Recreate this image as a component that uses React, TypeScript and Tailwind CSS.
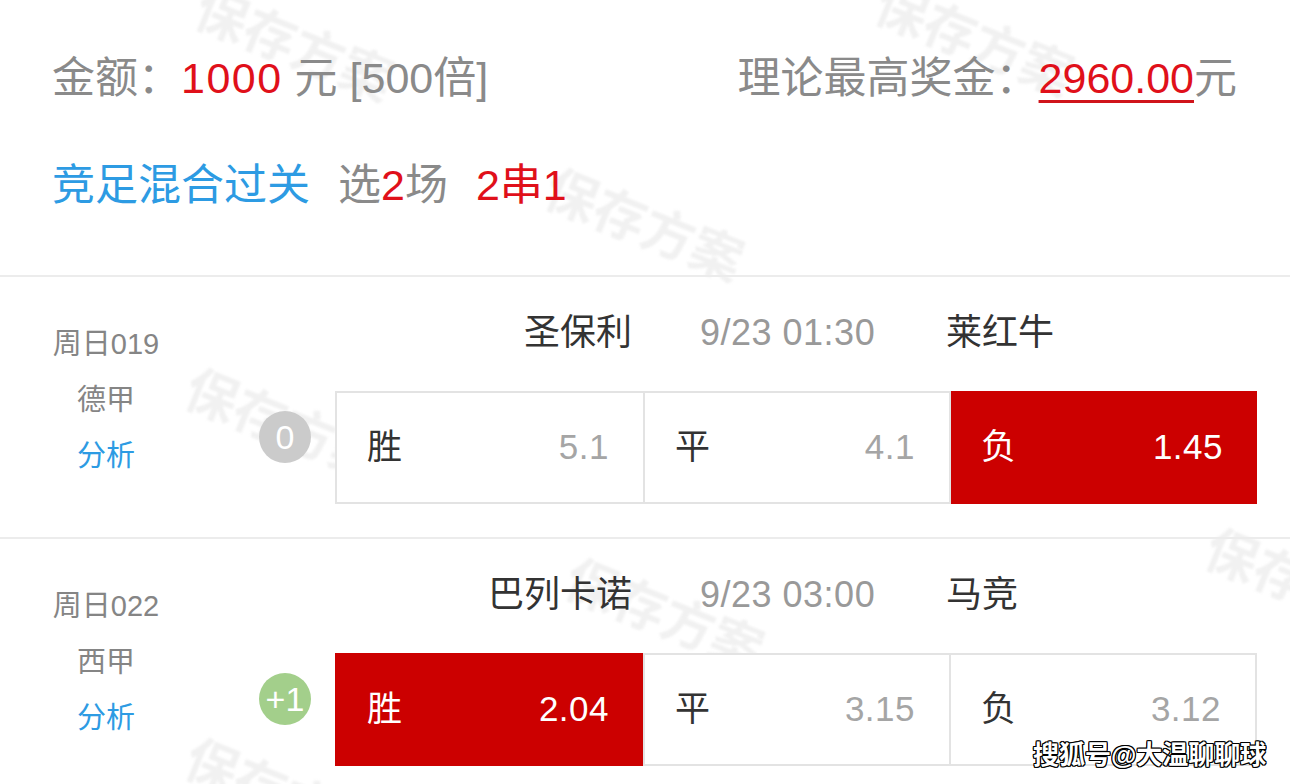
import React from "react";

const FONT = "font-['Liberation_Sans','Noto_Sans_CJK_SC',sans-serif]";

type Cell = { label: string; odd: string; on?: boolean };
type Match = {
  code: string;
  league: string;
  home: string;
  time: string;
  away: string;
  handicap: string;
  badge: "gray" | "green";
  cells: Cell[];
};

const matches: Match[] = [
  {
    code: "周日019",
    league: "德甲",
    home: "圣保利",
    time: "9/23 01:30",
    away: "莱红牛",
    handicap: "0",
    badge: "gray",
    cells: [
      { label: "胜", odd: "5.1" },
      { label: "平", odd: "4.1" },
      { label: "负", odd: "1.45", on: true },
    ],
  },
  {
    code: "周日022",
    league: "西甲",
    home: "巴列卡诺",
    time: "9/23 03:00",
    away: "马竞",
    handicap: "+1",
    badge: "green",
    cells: [
      { label: "胜", odd: "2.04", on: true },
      { label: "平", odd: "3.15" },
      { label: "负", odd: "3.12" },
    ],
  },
];

function Watermark({ className }: { className: string }) {
  return (
    <div
      className={`pointer-events-none absolute select-none whitespace-nowrap text-[52px] font-bold leading-none text-[#f1f1f1] blur-[1px] rotate-[22deg] ${className}`}
    >
      保存方案
    </div>
  );
}

function MatchRow({ m }: { m: Match }) {
  return (
    <div className="flex h-[262px] border-t-2 border-[#ececec]">
      <div className="flex w-[212px] flex-col items-center pt-[39px] text-[29px] leading-[56px]">
        <div className="text-[#858585]">{m.code}</div>
        <div className="text-[#858585]">{m.league}</div>
        <div className="text-[#2d9be3]">分析</div>
      </div>
      <div className="flex flex-1 flex-col">
        <div className="flex items-center pl-[123px] pt-[36px] text-[36px] leading-[40px]">
          <div className="w-[297px] text-right text-[#333]">{m.home}</div>
          <div className="ml-[68px] w-[178px] whitespace-nowrap text-[#999] tracking-[0.5px]">{m.time}</div>
          <div className="ml-[68px] text-[#333]">{m.away}</div>
        </div>
        <div className="mt-[38px] flex items-start">
          <div className="ml-[47px] mt-[20px] flex w-[52px] justify-center">
            <div
              className={`flex h-[52px] w-[52px] items-center justify-center rounded-full text-[34px] text-white ${
                m.badge === "gray" ? "bg-[#cbcbcb]" : "bg-[#a3cf8b]"
              }`}
            >
              {m.handicap}
            </div>
          </div>
          <div className="relative z-10 ml-[24px] grid h-[113px] w-[922px] grid-cols-3 border-2 border-[#e3e3e3] bg-white">
            {m.cells.map((c, i) => (
              <div
                key={i}
                className={`flex items-center justify-between pl-[30px] pr-[34px] text-[35px] ${
                  i > 0 ? "border-l-2 border-[#e3e3e3]" : ""
                } ${c.on ? "-my-[2px] bg-[#cc0000] text-white" : "bg-white"} ${
                  c.on && i === 2 ? "-mr-[2px]" : ""
                } ${c.on && i === 0 ? "-ml-[2px] pl-[32px]" : ""}`}
              >
                <span className={c.on ? "text-white" : "text-[#333]"}>{c.label}</span>
                <span className={`tracking-[0.5px] ${c.on ? "text-white" : "text-[#a5a5a5]"}`}>{c.odd}</span>
              </div>
            ))}
          </div>
        </div>
      </div>
    </div>
  );
}

export default function App() {
  return (
    <div className={`relative h-[784px] w-[1290px] overflow-hidden bg-white ${FONT}`}>
      <Watermark className="left-[190px] top-[20px]" />
      <Watermark className="left-[870px] top-[15px]" />
      <Watermark className="left-[540px] top-[200px]" />
      <Watermark className="left-[180px] top-[400px]" />
      <Watermark className="left-[560px] top-[590px]" />
      <Watermark className="left-[180px] top-[770px]" />
      <Watermark className="left-[1200px] top-[560px]" />

      <div className="relative">
        <div className="pl-[52px] pr-[53px] pt-[56px]">
          <div className="flex items-center justify-between text-[43px] leading-[44px]">
            <div className="whitespace-nowrap text-[#8a8a8a]">
              金额：<span className="tracking-[1.5px] text-[#e0101a]">1000</span> 元 [500倍]
            </div>
            <div className="whitespace-nowrap text-[#8a8a8a]">
              理论最高奖金：
              <span className="text-[#e0101a] underline decoration-[#d0141b] decoration-[3px] underline-offset-[7px]">
                2960.00
              </span>
              元
            </div>
          </div>
          <div className="mt-[63px] flex items-center whitespace-nowrap text-[43px] leading-[44px]">
            <span className="text-[#2d9be3]">竞足混合过关</span>
            <span className="ml-[28px] text-[#8a8a8a]">
              选<span className="text-[#e0101a]">2</span>场
            </span>
            <span className="ml-[28px] text-[#e0101a]">2串1</span>
          </div>
        </div>
        <div className="mt-[68px]">
          {matches.map((m, i) => (
            <MatchRow key={i} m={m} />
          ))}
        </div>
      </div>

      <div className="absolute left-[1033px] top-[738px] z-20 whitespace-nowrap text-[26px] font-bold leading-[34px] text-white [text-shadow:1px_1px_0_#000,-1px_-1px_0_#000,1px_-1px_0_#000,-1px_1px_0_#000,0_1px_0_#000,0_-1px_0_#000,1px_0_0_#000,-1px_0_0_#000]">
        搜狐号@大温聊聊球
      </div>
    </div>
  );
}
